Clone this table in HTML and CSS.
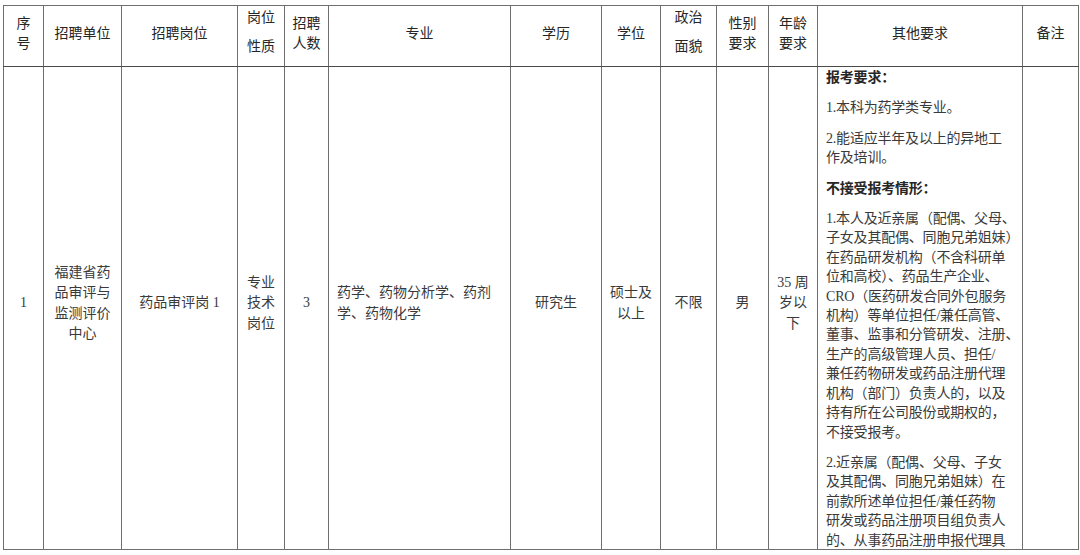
FILE: index.html
```html
<!DOCTYPE html>
<html lang="zh-CN">
<head>
<meta charset="utf-8">
<title>招聘岗位表</title>
<link rel="stylesheet" href="styles.css">
</head>
<body>
<div class="sheet">
<table class="jobs">
  <colgroup>
    <col class="c-no"><col class="c-unit"><col class="c-post"><col class="c-type"><col class="c-num">
    <col class="c-major"><col class="c-edu"><col class="c-deg"><col class="c-pol"><col class="c-sex">
    <col class="c-age"><col class="c-other"><col class="c-note">
  </colgroup>
  <thead>
    <tr class="head-row">
      <th>序<br>号</th>
      <th>招聘单位</th>
      <th>招聘岗位</th>
      <th><span class="tall">岗位<br>性质</span></th>
      <th>招聘<br>人数</th>
      <th>专业</th>
      <th>学历</th>
      <th>学位</th>
      <th><span class="tall">政治<br>面貌</span></th>
      <th>性别<br>要求</th>
      <th>年龄<br>要求</th>
      <th>其他要求</th>
      <th>备注</th>
    </tr>
  </thead>
  <tbody>
    <tr class="body-row">
      <td>1</td>
      <td>福建省药品审评与监测评价中心</td>
      <td>药品审评岗 1</td>
      <td>专业技术岗位</td>
      <td>3</td>
      <td class="left">药学、药物分析学、药剂学、药物化学</td>
      <td>研究生</td>
      <td>硕士及以上</td>
      <td>不限</td>
      <td>男</td>
      <td>35 周岁以下</td>
      <td class="other">
        <div class="other-box">
          <p class="strong">报考要求：</p>
          <p>1.本科为药学类专业。</p>
          <p>2.能适应半年及以上的异地工<br>作及培训。</p>
          <p class="strong">不接受报考情形：</p>
          <p>1.本人及近亲属（配偶、父母、<br>子女及其配偶、同胞兄弟姐妹）<br>在药品研发机构（不含科研单<br>位和高校）、药品生产企业、<br>CRO（医药研发合同外包服务<br>机构）等单位担任/兼任高管、<br>董事、监事和分管研发、注册、<br>生产的高级管理人员、担任/<br>兼任药物研发或药品注册代理<br>机构（部门）负责人的，以及<br>持有所在公司股份或期权的，<br>不接受报考。</p>
          <p>2.近亲属（配偶、父母、子女<br>及其配偶、同胞兄弟姐妹）在<br>前款所述单位担任/兼任药物<br>研发或药品注册项目组负责人<br>的、从事药品注册申报代理具</p>
        </div>
      </td>
      <td></td>
    </tr>
  </tbody>
</table>
</div>
</body>
</html>
```

FILE: styles.css
```css
html, body {
  margin: 0;
  padding: 0;
  background: #ffffff;
}

.sheet {
  padding: 5px 0 0 3px;
}

.jobs {
  border-collapse: collapse;
  table-layout: fixed;
  width: 1075px;
}

.c-no { width: 40px; }
.c-unit { width: 78px; }
.c-post { width: 116px; }
.c-type { width: 47px; }
.c-num { width: 44px; }
.c-major { width: 182px; }
.c-edu { width: 91px; }
.c-deg { width: 59px; }
.c-pol { width: 56px; }
.c-sex { width: 52px; }
.c-age { width: 49px; }
.c-other { width: 205px; }
.c-note { width: 56px; }

.jobs th,
.jobs td {
  border: 1px solid #6f6f6f;
  text-align: center;
  vertical-align: middle;
}

.head-row {
  height: 61px;
}

.jobs th {
  padding: 0 2px 8px;
  font-family: "Noto Sans CJK SC", "Noto Sans", sans-serif;
  font-size: 14px;
  font-weight: normal;
  line-height: 20px;
  color: #262626;
  border-bottom-color: #4a4a4a;
}

.jobs th .tall {
  display: block;
  line-height: 29px;
  margin-top: -9px;
  margin-bottom: -7px;
}

.body-row {
  height: 483px;
}

.jobs td {
  padding: 0 8px 9px;
  font-family: "Liberation Serif", "Noto Sans CJK SC", serif;
  font-size: 14px;
  line-height: 20.3px;
  color: #3a3a3a;
}

.jobs td.left {
  text-align: left;
}

.jobs td.other {
  text-align: left;
  vertical-align: top;
  padding: 0 0 0 8px;
}

.other-box {
  height: 481px;
  overflow: hidden;
}

.other-box p {
  margin: 1px 0 11px;
  line-height: 19.4px;
  white-space: nowrap;
  letter-spacing: -0.2px;
}

.other-box p + p {
  margin-top: 0;
}

.other-box p.strong {
  font-weight: bold;
  color: #262626;
}
```
